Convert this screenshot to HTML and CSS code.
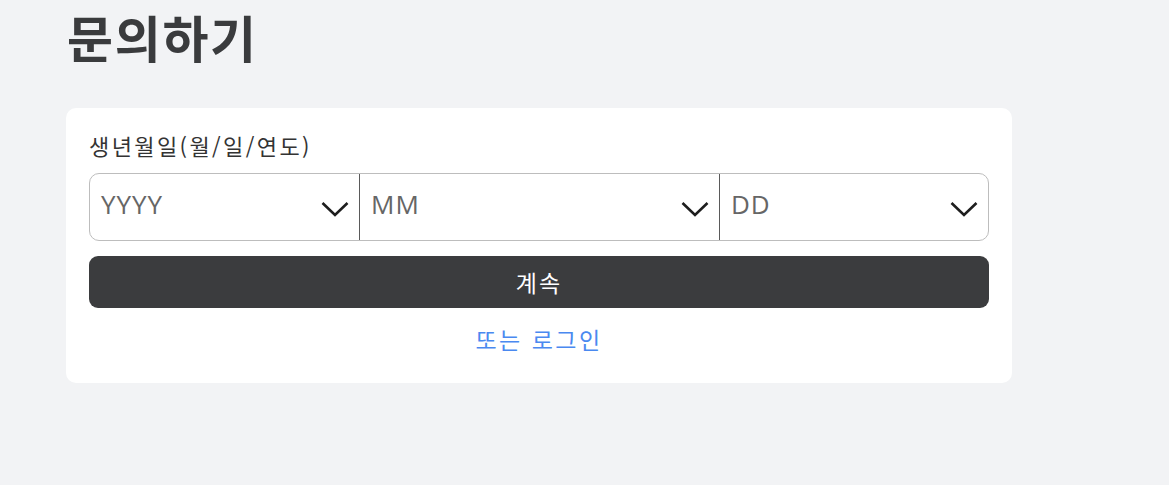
FILE: index.html
```html
<!DOCTYPE html>
<html lang="ko">
<head>
<meta charset="utf-8">
<link rel="stylesheet" href="styles.css">
</head>
<body>
<main class="page">
  <h1 class="title">문의하기</h1>
  <section class="card">
    <div class="label">생년월일(월/일/연도)</div>
    <div class="date-group">
      <div class="select sel-y"><span class="ph">YYYY</span>
        <svg class="chev" viewBox="0 0 28 16" width="28" height="16"><path d="M1.5 2 L14 14 L26.5 2" fill="none" stroke="#1e1e1e" stroke-width="2.6"/></svg>
      </div>
      <div class="select sel-m"><span class="ph">MM</span>
        <svg class="chev" viewBox="0 0 28 16" width="28" height="16"><path d="M1.5 2 L14 14 L26.5 2" fill="none" stroke="#1e1e1e" stroke-width="2.6"/></svg>
      </div>
      <div class="select sel-d"><span class="ph">DD</span>
        <svg class="chev" viewBox="0 0 28 16" width="28" height="16"><path d="M1.5 2 L14 14 L26.5 2" fill="none" stroke="#1e1e1e" stroke-width="2.6"/></svg>
      </div>
    </div>
    <button class="btn">계속</button>
    <a class="login" href="#">또는 로그인</a>
  </section>
</main>
</body>
</html>
```
FILE: styles.css
```css
html, body {
  margin: 0;
  padding: 0;
  background: #f2f3f5;
}
body {
  font-family: "Open Sans", "Noto Sans CJK KR", sans-serif;
  color: #333;
}
.page {
  padding: 0 0 0 66px;
  width: 946px;
}
.title {
  margin: 0;
  padding: 0 0 0 1px;
  font-family: "Noto Sans CJK KR", sans-serif;
  font-size: 50px;
  font-weight: 700;
  line-height: 72px;
  color: #3a3b3d;
  letter-spacing: 1.7px;
}
.card {
  margin-top: 36px;
  background: #fff;
  border-radius: 10px;
  padding: 22px 23px 27px 23px;
  display: flex;
  flex-direction: column;
}
.label {
  font-family: "Noto Sans CJK KR", sans-serif;
  font-size: 22px;
  line-height: 30px;
  color: #333;
  letter-spacing: 2.4px;
}
.date-group {
  margin-top: 13px;
  display: flex;
  height: 68px;
  box-sizing: border-box;
  border: 1px solid #bdbdbd;
  border-radius: 10px;
}
.select {
  display: flex;
  align-items: center;
  justify-content: space-between;
  box-sizing: border-box;
  padding: 0 10px 0 11px;
}
.sel-y { width: 269px; }
.sel-m { width: 360px; border-left: 1px solid #5a5a5a; }
.sel-d { flex: 1; border-left: 1px solid #5a5a5a; }
.ph {
  font-family: "Open Sans", sans-serif;
  font-size: 26px;
  letter-spacing: 1px;
  color: #666;
  margin-top: -6px;
}
.chev {
  display: block;
  margin-top: 3px;
}
.btn {
  margin-top: 15px;
  height: 52px;
  border: none;
  border-radius: 9px;
  background: #3b3c3e;
  color: #fff;
  font-family: "Noto Sans CJK KR", sans-serif;
  font-size: 23px;
  letter-spacing: 2px;
  padding: 0;
}
.login {
  margin-top: 14px;
  align-self: center;
  font-family: "Noto Sans CJK KR", sans-serif;
  font-size: 23px;
  line-height: 34px;
  color: #4a89f0;
  text-decoration: none;
  letter-spacing: 2.5px;
}
```
